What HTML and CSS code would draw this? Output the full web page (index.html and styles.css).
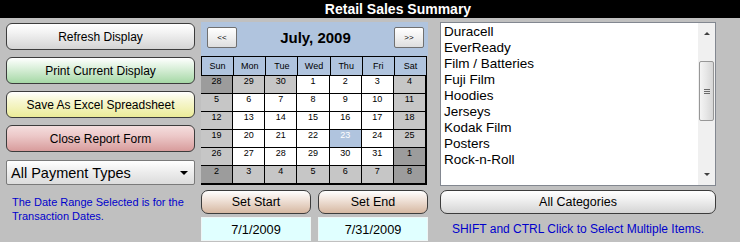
FILE: index.html
```html
<!DOCTYPE html>
<html>
<head>
<meta charset="utf-8">
<link rel="stylesheet" href="styles.css">
</head>
<body>
<div class="title">Retail Sales Summary</div>
<div class="main">
  <div class="left">
    <div class="btn btn-gray">Refresh Display</div>
    <div class="btn btn-green">Print Current Display</div>
    <div class="btn btn-yellow">Save As Excel Spreadsheet</div>
    <div class="btn btn-red">Close Report Form</div>
    <div class="select"><span>All Payment Types</span><span class="caret"></span></div>
    <div class="note">The Date Range Selected is for the<br>Transaction Dates.</div>
  </div>
  <div class="cal-col">
    <div class="cal-head">
      <div class="nav">&lt;&lt;</div>
      <div class="month">July, 2009</div>
      <div class="nav">&gt;&gt;</div>
    </div>
    <div class="dow">
      <div>Sun</div><div>Mon</div><div>Tue</div><div>Wed</div><div>Thu</div><div>Fri</div><div>Sat</div>
    </div>
    <div class="days">
      <div class="od">28</div><div class="o">29</div><div class="o">30</div><div>1</div><div>2</div><div>3</div><div class="w">4</div>
      <div class="w">5</div><div>6</div><div>7</div><div>8</div><div>9</div><div>10</div><div class="w">11</div>
      <div class="w">12</div><div>13</div><div>14</div><div>15</div><div>16</div><div>17</div><div class="w">18</div>
      <div class="w">19</div><div>20</div><div>21</div><div>22</div><div class="sel">23</div><div>24</div><div class="w">25</div>
      <div class="w">26</div><div>27</div><div>28</div><div>29</div><div>30</div><div>31</div><div class="od">1</div>
      <div class="od">2</div><div class="o">3</div><div class="o">4</div><div class="o">5</div><div class="o">6</div><div class="o">7</div><div class="od">8</div>
    </div>
    <div class="pair">
      <div class="btn btn-tan">Set Start</div>
      <div class="btn btn-tan">Set End</div>
    </div>
    <div class="pair">
      <div class="datebox">7/1/2009</div>
      <div class="datebox">7/31/2009</div>
    </div>
  </div>
  <div class="right">
    <div class="listbox">
      <div class="items">
        <div>Duracell</div>
        <div>EverReady</div>
        <div>Film / Batteries</div>
        <div>Fuji Film</div>
        <div>Hoodies</div>
        <div>Jerseys</div>
        <div>Kodak Film</div>
        <div>Posters</div>
        <div>Rock-n-Roll</div>
      </div>
      <div class="scroll">
        <div class="arrow up"></div>
        <div class="thumb"><span></span><span></span><span></span></div>
        <div class="arrow down"></div>
      </div>
    </div>
    <div class="btn btn-gray btn-cat">All Categories</div>
    <div class="hint">SHIFT and CTRL Click to Select Multiple Items.</div>
  </div>
</div>
</body>
</html>
```

FILE: styles.css
```css
html, body {
  margin: 0;
  padding: 0;
}
body {
  width: 740px;
  height: 242px;
  background: #c0c0c0;
  font-family: "Liberation Sans", Arial, sans-serif;
  overflow: hidden;
}
.title {
  height: 18px;
  line-height: 18px;
  background: #000;
  color: #fff;
  font-weight: bold;
  font-size: 14px;
  text-align: center;
  padding-left: 56px;
}
.main {
  display: flex;
  padding: 4px 0 0 6px;
}
.left {
  width: 189px;
  margin-top: 1px;
  display: flex;
  flex-direction: column;
}
.btn {
  box-sizing: border-box;
  height: 27px;
  border: 1px solid #3c3c3c;
  border-radius: 6px;
  display: flex;
  align-items: center;
  justify-content: center;
  font-size: 12px;
  color: #000;
}
.left .btn {
  margin-bottom: 7px;
}
.btn-gray { background: linear-gradient(#ffffff, #f2f2f2 35%, #d4d4d4); }
.btn-green { background: linear-gradient(#ffffff, #e4f4e4 30%, #a6d8a6); }
.btn-yellow { background: linear-gradient(#ffffff, #f8f8d8 30%, #ecec98); }
.btn-red { background: linear-gradient(#f4dede, #ecc8c8 40%, #d89c9c); }
.btn-tan { background: linear-gradient(#ffffff, #f2e6de 35%, #d6b8a2); }
.select {
  box-sizing: border-box;
  height: 25px;
  margin-top: 1px;
  border: 1px solid #7a7a7a;
  border-radius: 2px;
  background: linear-gradient(#ffffff, #ececec 50%, #dcdcdc);
  display: flex;
  align-items: center;
  justify-content: space-between;
  padding: 0 6px 0 4px;
  font-size: 14.5px;
  color: #000;
}
.caret {
  width: 0;
  height: 0;
  border-left: 4px solid transparent;
  border-right: 4px solid transparent;
  border-top: 4px solid #000;
}
.note {
  margin-top: 10px;
  padding-left: 6px;
  font-size: 11px;
  line-height: 14px;
  color: #0000cc;
}
.cal-col {
  width: 227px;
  margin-left: 6px;
  display: flex;
  flex-direction: column;
}
.cal-head {
  height: 34px;
  background: #b0c4de;
  display: flex;
  align-items: flex-start;
  justify-content: space-between;
  padding: 5px 4px 0 6px;
  box-sizing: border-box;
}
.nav {
  box-sizing: border-box;
  width: 30px;
  height: 21px;
  border: 1px solid #707070;
  border-radius: 2px;
  background: linear-gradient(#ffffff, #f0f0f0 50%, #dedede);
  font-size: 8px;
  display: flex;
  align-items: center;
  justify-content: center;
}
.month {
  font-weight: bold;
  font-size: 15px;
  line-height: 21px;
  color: #000;
}
.dow {
  width: 226px;
  box-sizing: border-box;
  display: grid;
  grid-template-columns: repeat(7, 1fr);
  gap: 1px;
  background: #000;
  padding: 1px;
}
.dow div {
  height: 18px;
  background: #b0c4de;
  font-size: 9px;
  line-height: 18px;
  text-align: center;
  color: #000;
}
.days {
  width: 226px;
  box-sizing: border-box;
  display: grid;
  grid-template-columns: repeat(7, 1fr);
  gap: 1px;
  background: #000;
  padding: 0 2px 2px 0;
}
.days div {
  height: 17px;
  background: #fff;
  font-size: 9px;
  line-height: 10px;
  text-align: center;
  color: #000;
}
.days .w, .days .o { background: #c6c6c6; }
.days .od { background: #9c9c9c; }
.days .sel { background: #b0c4de; color: #fff; }
.pair {
  display: flex;
  justify-content: space-between;
}
.pair .btn {
  width: 110px;
  height: 24px;
  margin-top: 5px;
  font-size: 12.5px;
  border-radius: 7px;
}
.datebox {
  box-sizing: border-box;
  width: 110px;
  height: 24px;
  margin-top: 3px;
  background: #e0ffff;
  border: 1px solid #eef6f6;
  font-size: 12.75px;
  display: flex;
  align-items: center;
  justify-content: center;
  color: #000;
}
.right {
  width: 276px;
  margin-left: 12px;
  display: flex;
  flex-direction: column;
}
.listbox {
  box-sizing: border-box;
  height: 164px;
  border: 1px solid #828790;
  background: #fff;
  display: flex;
}
.items {
  flex: 1;
  padding: 1px 0 0 3px;
  font-size: 13.5px;
  line-height: 16px;
  color: #000;
}
.scroll {
  width: 17px;
  background: #f0f0f0;
  display: flex;
  flex-direction: column;
  align-items: center;
}
.arrow {
  width: 0;
  height: 0;
  border-left: 3px solid transparent;
  border-right: 3px solid transparent;
}
.arrow.up {
  border-bottom: 3px solid #404040;
  margin-top: 9px;
}
.arrow.down {
  border-top: 3px solid #404040;
  margin-top: auto;
  margin-bottom: 9px;
}
.thumb {
  box-sizing: border-box;
  width: 15px;
  height: 60px;
  margin-top: 26px;
  border: 1px solid #979797;
  border-radius: 2px;
  background: linear-gradient(90deg, #f4f4f4, #e6e6e6 50%, #d6d6d6);
  display: flex;
  flex-direction: column;
  align-items: center;
  justify-content: center;
  gap: 1px;
}
.thumb span {
  width: 6px;
  height: 1px;
  background: #6a6a6a;
}
.btn-cat {
  height: 24px;
  margin-top: 4px;
  font-size: 12.5px;
  border-radius: 7px;
}
.hint {
  margin-top: 8px;
  text-align: center;
  font-size: 12px;
  line-height: 14px;
  color: #0000cc;
}
```
